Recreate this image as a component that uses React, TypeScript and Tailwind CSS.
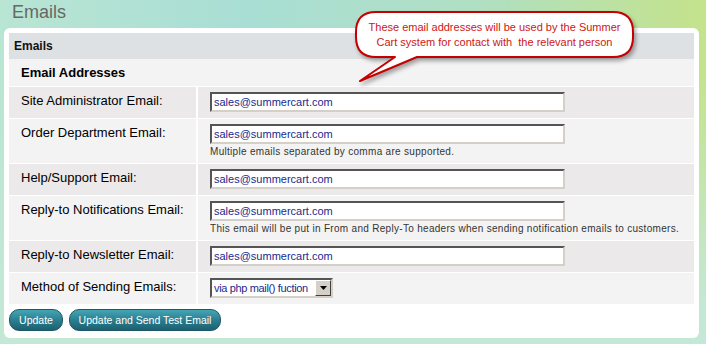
import React from "react";

type Row = { label: string; value: string; hint?: string; select?: boolean };

const rows: Row[] = [
  { label: "Site Administrator Email:", value: "sales@summercart.com" },
  {
    label: "Order Department Email:",
    value: "sales@summercart.com",
    hint: "Multiple emails separated by comma are supported.",
  },
  { label: "Help/Support Email:", value: "sales@summercart.com" },
  {
    label: "Reply-to Notifications Email:",
    value: "sales@summercart.com",
    hint: "This email will be put in From and Reply-To headers when sending notification emails to customers.",
  },
  { label: "Reply-to Newsletter Email:", value: "sales@summercart.com" },
  { label: "Method of Sending Emails:", value: "via php mail() fuction", select: true },
];

function TextBox({ value }: { value: string }) {
  return (
    <div className="w-[355px] h-[20px] bg-white border-2 border-t-[#555555] border-l-[#555555] border-b-[#d4d0c8] border-r-[#d4d0c8] pl-[2px] text-[11px] leading-[16px] text-[#1b2a8c]">
      {value}
    </div>
  );
}

function SelectBox({ value }: { value: string }) {
  return (
    <div className="w-[123px] h-[20px] bg-white border-2 border-t-[#555555] border-l-[#555555] border-b-[#d4d0c8] border-r-[#d4d0c8] flex items-stretch">
      <div className="flex-1 pl-[2px] text-[11px] tracking-[-0.35px] leading-[16px] text-[#1b2a8c] whitespace-nowrap overflow-hidden">{value}</div>
      <div className="w-[16px] bg-[#d4d0c8] border border-t-white border-l-white border-b-[#404040] border-r-[#404040] flex items-center justify-center">
        <svg width="7" height="4" viewBox="0 0 7 4">
          <path d="M0 0 H7 L3.5 4 Z" fill="#000" />
        </svg>
      </div>
    </div>
  );
}

export default function App() {
  return (
    <div className="relative w-[706px] h-[344px] overflow-hidden font-['Liberation_Sans',Arial,sans-serif] bg-[linear-gradient(180deg,rgba(196,233,214,0)_0%,rgba(196,233,214,0)_22%,#c3e8d6_90%),linear-gradient(90deg,#b9e5d3_0%,#a9ded5_35%,#b0dfc2_68%,#c5e38c_100%)]">
      <h1 className="h-[28px] pl-[12px] pt-[2px] text-[18px] leading-[20px] text-[#676767]">Emails</h1>
      <div className="ml-[4px] w-[695px] bg-white rounded-[6px] pt-[5px] px-[5px] pb-[7px]">
        <div className="h-[26px] bg-[#dde1e3] pl-[5px] text-[12px] font-bold leading-[26px] text-[#111]">Emails</div>
        <div className="h-[27px] bg-[#f3f3f3] pl-[12px] text-[13px] font-bold leading-[27px] text-black">Email Addresses</div>
        <div className="flex flex-col gap-[1px] bg-white pt-[1px]">
          {rows.map((r, i) => (
            <div key={r.label} className="flex gap-[2px] bg-white">
              <div className={`w-[187px] pl-[12px] pt-[6px] text-[13px] leading-[15px] text-black ${i % 2 === 0 ? "bg-[#ebe9ea]" : "bg-[#f3f3f3]"}`}>
                {r.label}
              </div>
              <div className={`flex-1 pl-[12px] pt-[5px] pb-[6px] ${i % 2 === 0 ? "bg-[#ebe9ea]" : "bg-[#f3f3f3]"}`}>
                {r.select ? <SelectBox value={r.value} /> : <TextBox value={r.value} />}
                {r.hint && (
                  <div className="mt-[2px] text-[10px] leading-[11px] tracking-[0.3px] text-[#333]">{r.hint}</div>
                )}
              </div>
            </div>
          ))}
        </div>
        <div className="flex gap-[6px] mt-[5px]">
          <button className="h-[22px] w-[54px] rounded-[10px] border border-[#1d5766] bg-[linear-gradient(180deg,#45a5b4_0%,#2a7f90_50%,#1d6070_100%)] text-white text-[10.5px] leading-[20px]">
            Update
          </button>
          <button className="h-[22px] w-[152px] rounded-[10px] border border-[#1d5766] bg-[linear-gradient(180deg,#45a5b4_0%,#2a7f90_50%,#1d6070_100%)] text-white text-[10.5px] leading-[20px]">
            Update and Send Test Email
          </button>
        </div>
      </div>

      <svg
        className="absolute left-[348px] top-[6px] drop-shadow-[2px_3px_2px_rgba(0,0,0,0.35)]"
        width="300"
        height="84"
        viewBox="0 0 300 84"
      >
        <path
          d="M28 6 H265 Q285 6 285 26 V31 Q285 51 265 51 H69 L12 75 L47 51 H28 Q8 51 8 31 V26 Q8 6 28 6 Z"
          fill="#ffffff"
          stroke="#c40000"
          strokeWidth="2"
          strokeLinejoin="round"
        />
      </svg>
      <div className="absolute left-[356px] top-[12px] w-[277px] h-[45px] flex items-center justify-center text-center text-[11px] leading-[15px] text-[#d01515]">
        <div>
          These email addresses will be used by the Summer
          <br />
          Cart system for contact with&nbsp; the relevant person
        </div>
      </div>
    </div>
  );
}
